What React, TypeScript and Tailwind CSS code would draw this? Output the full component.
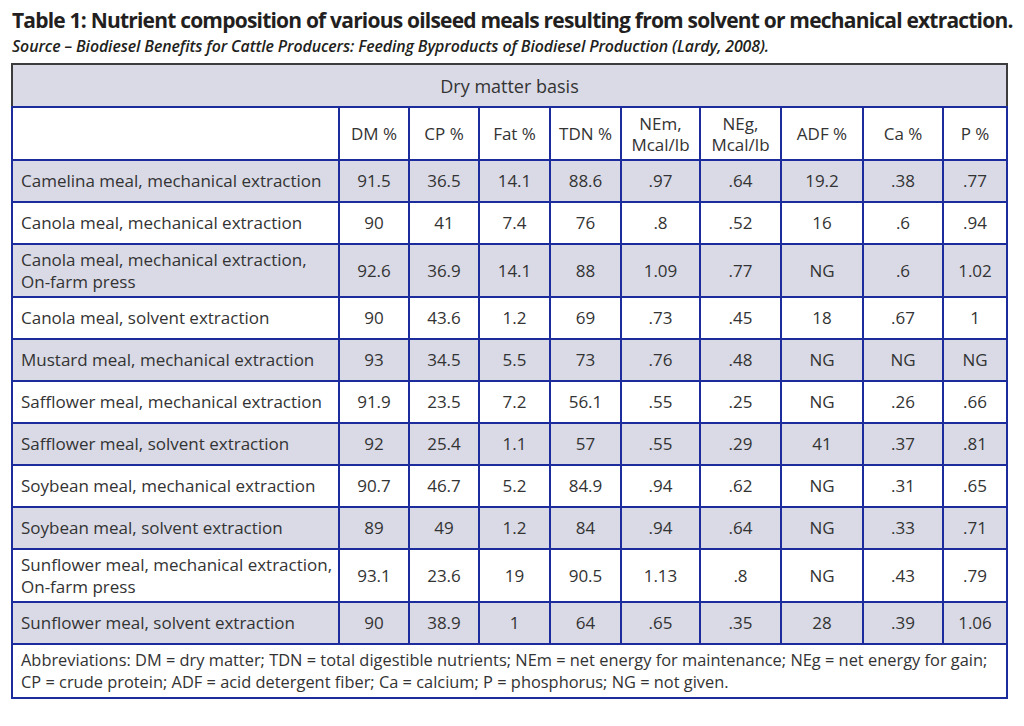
const rows: { name: string[]; vals: string[] }[] = [
  { name: ["Camelina meal, mechanical extraction"], vals: ["91.5", "36.5", "14.1", "88.6", ".97", ".64", "19.2", ".38", ".77"] },
  { name: ["Canola meal, mechanical extraction"], vals: ["90", "41", "7.4", "76", ".8", ".52", "16", ".6", ".94"] },
  { name: ["Canola meal, mechanical extraction,", "On-farm press"], vals: ["92.6", "36.9", "14.1", "88", "1.09", ".77", "NG", ".6", "1.02"] },
  { name: ["Canola meal, solvent extraction"], vals: ["90", "43.6", "1.2", "69", ".73", ".45", "18", ".67", "1"] },
  { name: ["Mustard meal, mechanical extraction"], vals: ["93", "34.5", "5.5", "73", ".76", ".48", "NG", "NG", "NG"] },
  { name: ["Safflower meal, mechanical extraction"], vals: ["91.9", "23.5", "7.2", "56.1", ".55", ".25", "NG", ".26", ".66"] },
  { name: ["Safflower meal, solvent extraction"], vals: ["92", "25.4", "1.1", "57", ".55", ".29", "41", ".37", ".81"] },
  { name: ["Soybean meal, mechanical extraction"], vals: ["90.7", "46.7", "5.2", "84.9", ".94", ".62", "NG", ".31", ".65"] },
  { name: ["Soybean meal, solvent extraction"], vals: ["89", "49", "1.2", "84", ".94", ".64", "NG", ".33", ".71"] },
  { name: ["Sunflower meal, mechanical extraction,", "On-farm press"], vals: ["93.1", "23.6", "19", "90.5", "1.13", ".8", "NG", ".43", ".79"] },
  { name: ["Sunflower meal, solvent extraction"], vals: ["90", "38.9", "1", "64", ".65", ".35", "28", ".39", "1.06"] },
];

const heads = [["DM %"], ["CP %"], ["Fat %"], ["TDN %"], ["NEm,", "Mcal/lb"], ["NEg,", "Mcal/lb"], ["ADF %"], ["Ca %"], ["P %"]];
const widths = [327, 70, 70, 71, 71, 79, 81, 82, 80, 64];

export default function App() {
  return (
    <div className="w-[1024px] h-[726px] bg-white text-[#333] font-['Open_Sans',sans-serif] overflow-hidden">
      <div className="pl-[12px] pt-[6px]">
        <h1 className="text-[21px] font-bold leading-[28px] tracking-[-0.8px] text-[#231f20] whitespace-nowrap">
          Table 1: Nutrient composition of various oilseed meals resulting from solvent or mechanical extraction.
        </h1>
        <p className="text-[15.9px] font-semibold italic leading-[20px] tracking-[-0.1px] text-[#231f20] mt-[2px] whitespace-nowrap">
          Source – Biodiesel Benefits for Cattle Producers: Feeding Byproducts of Biodiesel Production (Lardy, 2008).
        </p>
      </div>
      <table className="ml-[11px] mt-[7px] w-[997px] table-fixed border-collapse text-[17px] leading-[22px]">
        <colgroup>
          {widths.map((w, i) => (
            <col key={i} style={{ width: w }} />
          ))}
        </colgroup>
        <tbody>
          <tr className="h-[43px] bg-[#d9dae6]">
            <td colSpan={10} className="border-2 border-[#3c3c3c] border-b-[#1c2c9c] text-center text-[18px]">
              Dry matter basis
            </td>
          </tr>
          <tr className="h-[53px] bg-white">
            <td className="border-2 border-[#1c2c9c]" />
            {heads.map((h, i) => (
              <td key={i} className="border-2 border-[#1c2c9c] text-center leading-[21px]">
                {h.map((l, j) => (
                  <div key={j}>{l}</div>
                ))}
              </td>
            ))}
          </tr>
          {rows.map((r, i) => (
            <tr
              key={i}
              className={`${r.name.length > 1 ? "h-[53px]" : "h-[42px]"} ${i % 2 === 0 ? "bg-[#d9dae6]" : "bg-white"}`}
            >
              <td className="border-2 border-[#1c2c9c] px-[8px] leading-[22px] whitespace-nowrap">
                {r.name.map((l, j) => (
                  <div key={j}>{l}</div>
                ))}
              </td>
              {r.vals.map((v, j) => (
                <td key={j} className="border-2 border-[#1c2c9c] text-center">
                  {v}
                </td>
              ))}
            </tr>
          ))}
          <tr className="h-[54px] bg-white">
            <td colSpan={10} className="border-2 border-[#1c2c9c] px-[8px] text-[16.4px] leading-[22px] whitespace-nowrap">
              <div>
                Abbreviations: DM = dry matter; TDN = total digestible nutrients; NEm = net energy for maintenance; NEg = net energy for gain;
              </div>
              <div>CP = crude protein; ADF = acid detergent fiber; Ca = calcium; P = phosphorus; NG = not given.</div>
            </td>
          </tr>
        </tbody>
      </table>
    </div>
  );
}
